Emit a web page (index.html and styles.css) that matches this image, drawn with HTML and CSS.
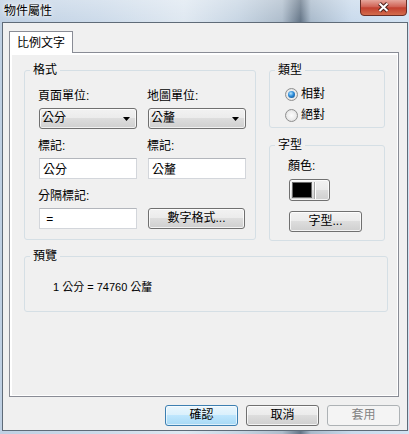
FILE: index.html
```html
<!DOCTYPE html>
<html lang="zh-Hant">
<head>
    <meta charset="UTF-8">
    <title>物件屬性</title>
    <meta name="viewport" content="width=device-width">
    <link rel="stylesheet" href="styles.css">
</head>
<body>
    <div class="window">
        <div class="titlebar">
            <span class="title">物件屬性</span>
            <svg class="close" width="47" height="16" viewBox="0 0 47 16">
                <defs>
                    <linearGradient id="close-bg" x1="0" y1="0" x2="0" y2="1">
                        <stop offset="0" stop-color="#e6a69c"/>
                        <stop offset="0.45" stop-color="#cf6153"/>
                        <stop offset="0.5" stop-color="#c2402f"/>
                        <stop offset="1" stop-color="#d5704f"/>
                    </linearGradient>
                </defs>
                <path d="M0.5 0 V12 Q0.5 15.5 4 15.5 H43 Q46.5 15.5 46.5 12 V0" fill="url(#close-bg)" stroke="#6a2e26"/>
                <path d="M19.5 3.5 L27.5 11 M27.5 3.5 L19.5 11" stroke="#4a211b" stroke-width="4"/>
                <path d="M19.5 3.5 L27.5 11 M27.5 3.5 L19.5 11" stroke="#fff" stroke-width="2"/>
            </svg>
        </div>

        <div class="client">
            <div class="tabs">
                <div class="tab">比例文字</div>
            </div>

            <div class="panel">
                <div class="top-row">
                    <fieldset class="group format">
                        <legend>格式</legend>
                        <div class="format-grid">
                            <div class="field">
                                <label>頁面單位:</label>
                                <div class="combo">
                                    <span>公分</span>
                                    <svg width="7" height="4" viewBox="0 0 7 4"><path d="M0 0 H7 L3.5 4 Z" fill="#000"/></svg>
                                </div>
                            </div>
                            <div class="field">
                                <label>地圖單位:</label>
                                <div class="combo">
                                    <span>公釐</span>
                                    <svg width="7" height="4" viewBox="0 0 7 4"><path d="M0 0 H7 L3.5 4 Z" fill="#000"/></svg>
                                </div>
                            </div>
                            <div class="field">
                                <label for="mark-page">標記:</label>
                                <input class="text" id="mark-page" type="text" value="公分" readonly>
                            </div>
                            <div class="field">
                                <label for="mark-map">標記:</label>
                                <input class="text" id="mark-map" type="text" value="公釐" readonly>
                            </div>
                            <div class="field">
                                <label for="mark-sep">分隔標記:</label>
                                <input class="text" id="mark-sep" type="text" value=" = " readonly>
                            </div>
                            <div class="field field-end">
                                <button class="btn btn-wide">數字格式...</button>
                            </div>
                        </div>
                    </fieldset>

                    <div class="side">
                        <fieldset class="group kind">
                            <legend>類型</legend>
                            <div class="radios">
                                <div class="radio-row"><span class="radio on"></span>相對</div>
                                <div class="radio-row"><span class="radio"></span>絕對</div>
                            </div>
                        </fieldset>
                        <fieldset class="group font">
                            <legend>字型</legend>
                            <div class="font-box">
                                <div class="color-label">顏色:</div>
                                <button class="btn swatch-btn"><span class="swatch"></span><span class="sep"></span></button>
                                <button class="btn btn-font">字型...</button>
                            </div>
                        </fieldset>
                    </div>
                </div>

                <fieldset class="group preview">
                    <legend>預覽</legend>
                    <div class="preview-text">1 公分 = 74760 公釐</div>
                </fieldset>
            </div>

            <div class="actions">
                <button class="btn btn-default">確認</button>
                <button class="btn">取消</button>
                <button class="btn" disabled>套用</button>
            </div>
        </div>
    </div>
</body>
</html>
```

FILE: styles.css
```css
*,
*::after,
*::before{
    padding: 0;
    margin: 0;
    box-sizing: border-box;
}
html{
    font: normal 12px/15px "Liberation Sans", "Noto Sans CJK TC", sans-serif;
    color: #000;
}
body{
    width: 409px;
    height: 434px;
    overflow: hidden;
}
.window{
    width: 409px;
    height: 434px;
    background:
        linear-gradient(rgba(255,255,255,0.25), rgba(255,255,255,0) 22px),
        linear-gradient(90deg, #bfd0e3 0%, #cddbea 25%, #dfe8f1 45%, #c8d6e4 58%, #aebdcc 69%, #647587 73.5%, #a9bacb 76%, #c9daec 86%, #d3e3f3 100%);
}

/* title bar */
.titlebar{
    height: 22px;
    display: flex;
    align-items: flex-start;
    padding-left: 4px;
}
.title{
    line-height: 20px;
    font-family: "Noto Sans CJK TC", sans-serif;
    text-shadow: 0 0 6px #fff, 0 0 3px #fff;
}
.close{
    margin-left: auto;
    margin-right: 2px;
    display: block;
}

/* client area */
.client{
    margin-left: 2px;
    width: 406px;
    height: 409px;
    border: 1px solid #5f6b78;
    background: #f0f0f0;
}
.tabs{
    display: flex;
    align-items: flex-end;
    padding: 8px 0 0 6px;
    height: 29px;
}
.tab{
    position: relative;
    height: 22px;
    margin-bottom: -1px;
    padding: 0 7px;
    line-height: 20px;
    font-family: "Noto Sans CJK TC", sans-serif;
    background: #fff;
    border: 1px solid #898c95;
    border-bottom: none;
}
.panel{
    margin-left: 6px;
    width: 390px;
    height: 345px;
    border: 1px solid #898c95;
    box-shadow: inset 2px 2px 0 #fff, inset -1px -1px 0 #fff;
    padding: 10px 0 0 14px;
}
.top-row{
    display: flex;
    align-items: flex-start;
    gap: 13px;
}

/* group boxes */
.group{
    border: 1px solid #d5dfe5;
    border-radius: 3px;
    min-width: 0;
}
.group legend{
    margin-left: 5px;
    padding: 0 3px;
    line-height: 14px;
}
.format{
    width: 232px;
}
.format-grid{
    display: grid;
    grid-template-columns: 98px 98px;
    column-gap: 11px;
    row-gap: 10px;
    padding: 12px 0 10px 14px;
}
.field label{
    display: block;
    height: 15px;
    line-height: 15px;
    margin-left: -1px;
}
.field .combo,
.field .text{
    margin-top: 4px;
}
.field-end{
    display: flex;
    align-items: flex-end;
}
.combo{
    display: flex;
    align-items: center;
    justify-content: space-between;
    height: 21px;
    padding: 0 6px 0 2px;
    border: 1px solid #707070;
    border-radius: 3px;
    background: linear-gradient(#f2f2f2 0%, #ebebeb 49%, #dddddd 50%, #cfcfcf 100%);
    box-shadow: inset 0 0 0 1px rgba(255,255,255,0.7);
}
.combo svg{
    display: block;
}
.text{
    display: block;
    width: 98px;
    height: 21px;
    padding: 0 3px;
    font: inherit;
    color: #000;
    background: #fff;
    border: 1px solid #d3d6db;
    border-top-color: #b3b6bc;
    outline: none;
}

.side{
    width: 116px;
    display: flex;
    flex-direction: column;
    gap: 10px;
}
.radios{
    display: flex;
    flex-direction: column;
    gap: 5px;
    padding: 9px 0 4px 15px;
}
.radio-row{
    display: flex;
    align-items: center;
    gap: 3px;
    height: 16px;
}
.radio{
    width: 13px;
    height: 13px;
    border-radius: 50%;
    border: 1px solid #8e8f8f;
    background: radial-gradient(circle at 50% 50%, #fdfdfd 0, #ececec 55%, #cfcfcf 100%);
    display: flex;
    align-items: center;
    justify-content: center;
}
.radio.on::after{
    content: "";
    width: 7px;
    height: 7px;
    border-radius: 50%;
    background: radial-gradient(circle at 40% 35%, #b6e6ff 0, #2b8ad8 45%, #0d457e 100%);
}
.font-box{
    padding: 7px 0 8px 19px;
}
.color-label{
    line-height: 15px;
    margin-left: -1px;
}

/* buttons */
.btn{
    display: block;
    height: 21px;
    font: 12px/19px "Liberation Sans", "Noto Sans CJK TC", sans-serif;
    color: #000;
    border: 1px solid #707070;
    border-radius: 3px;
    background: linear-gradient(#f2f2f2 0%, #ebebeb 49%, #dddddd 50%, #cfcfcf 100%);
    box-shadow: inset 0 0 0 1px rgba(255,255,255,0.75);
}
.btn-wide{
    width: 97px;
}
.swatch-btn{
    width: 41px;
    height: 22px;
    margin-top: 5px;
    display: flex;
    align-items: center;
    padding-left: 2px;
}
.swatch{
    width: 20px;
    height: 16px;
    background: #000;
    border: 1px solid #6a6a6a;
}
.sep{
    width: 1px;
    height: 17px;
    margin-left: 2px;
    background: #a7a7a7;
    box-shadow: 1px 0 0 #fff;
}
.btn-font{
    width: 73px;
    margin-top: 10px;
}

.preview{
    width: 364px;
    margin-top: 8px;
}
.preview-text{
    padding: 17px 0 16px 28px;
    font-size: 11px;
    line-height: 15px;
}

.actions{
    display: flex;
    justify-content: flex-end;
    gap: 8px;
    padding: 8px 7px 0 0;
}
.actions .btn{
    width: 73px;
}
.btn-default{
    border-color: #3c7fb1;
    background: linear-gradient(#eaf6fd 0%, #d9f0fc 49%, #bee6fd 50%, #a7d9f5 100%);
    box-shadow: inset 0 0 0 1px rgba(255,255,255,0.6);
}
.btn:disabled{
    color: #838383;
    border-color: #adb2b5;
    background: #f4f4f4;
    box-shadow: none;
}
```
